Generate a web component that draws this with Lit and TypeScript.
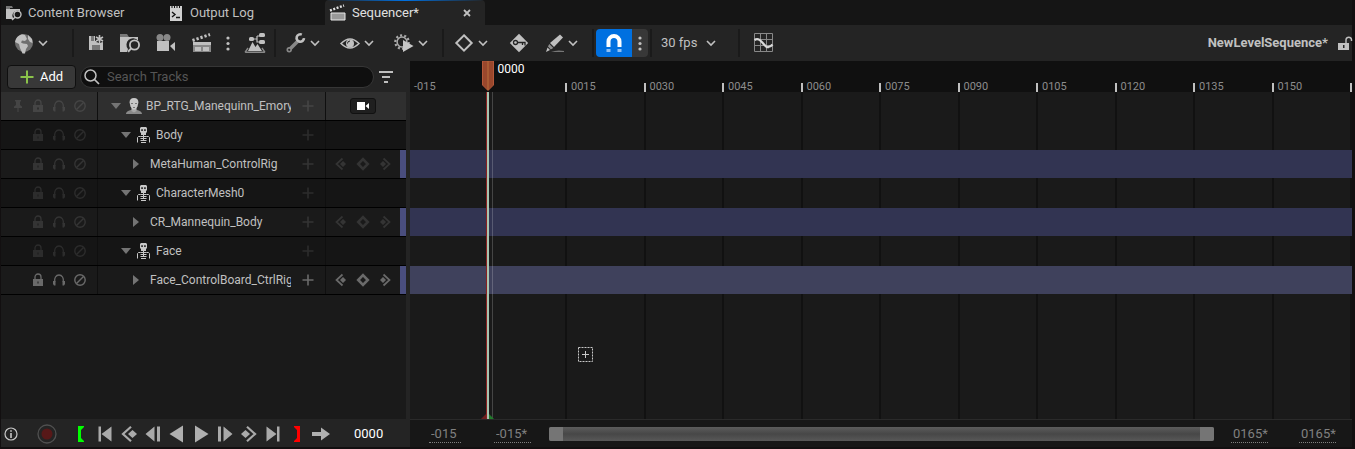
import { LitElement, html, svg, css, nothing, TemplateResult, SVGTemplateResult } from "lit";
import { customElement, property } from "lit/decorators.js";
import { classMap } from "lit/directives/class-map.js";
import { styleMap } from "lit/directives/style-map.js";

type Glyph = { w: number; h: number; body: SVGTemplateResult };

const skeleton = svg`
  <path fill="currentColor" fill-rule="evenodd" d="M4 0h5l1 1v4l-1 1v2h-5v-2l-1-1v-4zM4.300 2.200v1.800h1.500v-1.800zM7.200 2.200v1.800h1.500v-1.800z"/>
  <path stroke="currentColor" fill="none" d="M.5 15.500v-5l1-1h2M12.500 15.500v-5l-1-1h-2M3.500 9.500h6M3.500 11.500h6M3.500 13.500h6M6.500 8v6M4 15.500h5"/>`;

const GLYPHS: Record<string, Glyph> = {
  chevron: { w: 10, h: 6, body: svg`<path d="M1 1l4 4 4-4" fill="none" stroke="#c0c0c0" stroke-width="1.600"/>` },
  browserTab: { w: 16, h: 16, body: svg`
    <path d="M0 4V1h6l1 2H4v1z" fill="#777"/>
    <path d="M0 4h14v2.200a5 5 0 0 0-6.500 7.300L7 14H0z" fill="#c0c0c0"/>
    <circle cx="11.500" cy="9.500" r="3.500" fill="#151515" stroke="#c0c0c0" stroke-width="1.400"/>
    <path d="M9 12.200L6 15" stroke="#c0c0c0" stroke-width="1.500"/>` },
  logTab: { w: 16, h: 16, body: svg`
    <path d="M2 1h1.500v2h1V1H6v2h1V1h1.500v2h1V1H11v2h1V1h2v15H2z" fill="#d0d0d0"/>
    <path d="M4 7l3 2.500L4 12M8 12.500h4" fill="none" stroke="#151515" stroke-width="1.400"/>` },
  clapperTab: { w: 16, h: 16, body: svg`
    <path d="M0 5.500L14 .5" stroke="#e0e0e0" stroke-width="2.400" stroke-dasharray="2 1.500"/>
    <path d="M1 8h14v7H1z" fill="#999" stroke="#e8e8e8"/>` },
  close: { w: 8, h: 8, body: svg`<path d="M1 1l6 6M7 1L1 7" stroke="#c0c0c0" stroke-width="1.800"/>` },
  globe: { w: 20, h: 20, body: svg`
    <circle cx="10" cy="10" r="9" fill="#6f6f6f"/>
    <path d="M2 6a9 9 0 0 1 6-4.700L11 2l2 4-2 2-3-.5-1 2 2 1 4 .5 1 2-2 3-1 4.500H8.500L6 15l-1-4-4-2z" fill="#c0c0c0"/>
    <path d="M14 2l4 4 .5 4-2.500-1-2-3z" fill="#c0c0c0"/>` },
  save: { w: 20, h: 20, body: svg`
    <path d="M5 3h6v5h8v9H5z" fill="#c0c0c0"/>
    <path d="M7 3h3v5H7zM8 12h8v5H8z" fill="#777"/>
    <path d="M15.500 2v8M12 4l7 4M12 8l7-4" stroke="#242424" stroke-width="3.500"/>
    <path d="M15.500 2v8M12 4l7 4M12 8l7-4" stroke="#c0c0c0" stroke-width="1.600"/>` },
  browse: { w: 20, h: 20, body: svg`
    <path d="M0 4V1h7l2 3z" fill="#777"/>
    <path d="M0 4h18v3.500A6.500 6.500 0 0 0 8 16l-1 3H0z" fill="#c0c0c0"/>
    <circle cx="14.500" cy="12" r="4.600" fill="#242424" stroke="#c0c0c0" stroke-width="1.800"/>
    <path d="M11.200 15.400L8 18.700" stroke="#c0c0c0" stroke-width="2"/>` },
  camera: { w: 20, h: 20, body: svg`
    <circle cx="4" cy="4.500" r="3.500" fill="#888"/><circle cx="11" cy="4.500" r="3.500" fill="#888"/>
    <path d="M1 8h12v10H1zM14 13l5-4v9z" fill="#c0c0c0"/>` },
  clapper: { w: 20, h: 20, body: svg`
    <path d="M.5 7.500L18 1.500" stroke="#c0c0c0" stroke-width="3" stroke-dasharray="2.300 1.900"/>
    <path d="M1 9h18v10H1z" fill="#888"/><path d="M1 9h18v3H1z" fill="#c0c0c0"/>
    <path d="M3 14h6v4H3zM11 14h6v4h-6z" fill="#c0c0c0"/>` },
  dots: { w: 4, h: 16, body: svg`<circle cx="2" cy="3" r="1.600" fill="#c0c0c0"/><circle cx="2" cy="8.500" r="1.600" fill="#c0c0c0"/><circle cx="2" cy="14" r="1.600" fill="#c0c0c0"/>` },
  hierarchy: { w: 22, h: 20, body: svg`
    <path d="M8 6h5M13 3v6h3M13 3h3" stroke="#c0c0c0" fill="none" stroke-width="1.200"/>
    <rect x="5" y="4" width="5" height="4" rx="1.500" fill="#c0c0c0"/><rect x="15" y="0" width="6" height="4" rx="1.500" fill="#c0c0c0"/><rect x="15" y="7" width="6" height="4" rx="1.500" fill="#c0c0c0"/>
    <path d="M4 18L8.500 9l3 5 2-3 4.500 7z" fill="#c0c0c0"/><path d="M1 19.300L4 15M21 19.300L18 15M1 19.300h20" stroke="#888" stroke-width="1.400"/>` },
  wrench: { w: 20, h: 20, body: svg`
    <path d="M3 17L12 8" stroke="#888" stroke-width="3.600"/><circle cx="3.200" cy="16.800" r="2.700" fill="#888"/><circle cx="3.200" cy="16.800" r="1.100" fill="#242424"/>
    <path d="M15.800 1.600A3.700 3.700 0 1 0 18 5.200" fill="none" stroke="#c0c0c0" stroke-width="2.600"/>` },
  eye: { w: 20, h: 20, body: svg`
    <path d="M1 10.500Q10 1.500 19 10.500Q10 19.500 1 10.500z" fill="none" stroke="#c0c0c0" stroke-width="1.500"/>
    <circle cx="10" cy="10.500" r="4" fill="#c0c0c0"/><path d="M7.500 10.500a2.500 2.500 0 0 1 2.500-2.500" stroke="#242424" fill="none"/>` },
  gearPlay: { w: 20, h: 20, body: svg`
    <circle cx="8" cy="9" r="6.700" fill="none" stroke="#aaa" stroke-width="2.200" stroke-dasharray="2.100 2.100"/>
    <circle cx="8" cy="9" r="4.900" fill="none" stroke="#aaa" stroke-width="1.500"/>
    <path d="M9 7l10.500 6L9 19z" fill="#c8c8c8"/>` },
  diamond: { w: 20, h: 20, body: svg`<path d="M10 2.300L17.700 10 10 17.700 2.300 10z" fill="none" stroke="#c0c0c0" stroke-width="2"/>` },
  key: { w: 20, h: 20, body: svg`
    <path d="M11 .8L20.200 10 11 19.200 1.800 10z" fill="#c0c0c0"/>
    <circle cx="7.500" cy="9.500" r="2" fill="none" stroke="#242424" stroke-width="1.300"/><path d="M9.500 9.500H17v3M14.500 9.500V12" fill="none" stroke="#242424" stroke-width="1.300"/>` },
  pencil: { w: 20, h: 20, body: svg`
    <path d="M16 1.500l3 3L10 14l-4-4z" fill="#c0c0c0"/><path d="M5.300 11l4 4-2.500 1.500L4 13.500z" fill="#909090"/><path d="M3.500 14.500l2.500 2.500-4 2z" fill="#c0c0c0"/>
    <path d="M7 19Q13 16.500 20 18v1z" fill="#777"/>` },
  magnet: { w: 18, h: 20, body: svg`
    <path d="M3.500 14V8.500a5.500 5.500 0 0 1 11 0V14" fill="none" stroke="#fff" stroke-width="4"/>
    <path d="M1.500 16h4v3h-4zM12.500 16h4v3h-4z" fill="#8fc0f4"/>` },
  curve: { w: 20, h: 20, body: svg`
    <path d="M.5.5h18v18H.5zM6.500.5v18M12.500.5v18M.5 6.500h18M.5 12.500h18" stroke="#888" fill="none"/>
    <path d="M.5 7C7 2.500 11 16.500 14.500 14Q16.500 14 18.500 11.500" stroke="#d8d8d8" stroke-width="2.200" fill="none"/>` },
  unlock: { w: 14, h: 16, body: svg`
    <path d="M0 8h11v7H0z" fill="#c0c0c0"/><path d="M5 10h1.500v3H5z" fill="#242424"/>
    <path d="M8 8V4.500a2.800 2.800 0 0 1 5.500 0V6" fill="none" stroke="#c0c0c0" stroke-width="1.400"/>` },
  plusGreen: { w: 14, h: 14, body: svg`<path d="M7 .5v13M.5 7h13" stroke="#8bc34a" stroke-width="2"/>` },
  search: { w: 16, h: 16, body: svg`<circle cx="6.500" cy="6.500" r="5.500" fill="none" stroke="#c0c0c0" stroke-width="1.500"/><path d="M10.500 10.500l4.500 4.500" stroke="#c0c0c0" stroke-width="1.700"/>` },
  filter: { w: 16, h: 14, body: svg`<path d="M1 2h14M4 7h8M6 12h4" stroke="#c0c0c0" stroke-width="2"/>` },
  pin: { w: 12, h: 14, body: svg`<path d="M3 1h6v1.500H8V6l2 1.500V9H2V7.500L4 6V2.500H3zM5.400 9h1.200v4H5.400z" fill="currentColor"/>` },
  lock: { w: 12, h: 14, body: svg`<path d="M1 6h10v7H1z" fill="currentColor"/><path d="M3 6V4a3 3 0 0 1 6 0v2" fill="none" stroke="currentColor" stroke-width="1.300"/><path d="M5.500 8.500h1v2h-1z" fill="#1a1a1a"/>` },
  phones: { w: 12, h: 14, body: svg`<path d="M1.700 9C1 5 3 2 6 2s5 3 4.300 7" fill="none" stroke="currentColor" stroke-width="1.300"/><path d="M0 8h2.500v4.500H1L0 11zM12 8H9.500v4.500H11l1-1.500z" fill="currentColor"/>` },
  ban: { w: 12, h: 14, body: svg`<circle cx="6" cy="7" r="5.200" fill="none" stroke="currentColor" stroke-width="1.400"/><path d="M2.500 10.500l7-7" stroke="currentColor" stroke-width="1.400"/>` },
  open: { w: 12, h: 8, body: svg`<path d="M1 1h10L6 7z" fill="#747474"/>` },
  closed: { w: 12, h: 12, body: svg`<path d="M3 1v10l6-5z" fill="#747474"/>` },
  person: { w: 16, h: 16, body: svg`
    <path d="M0 16c0-3 4-3.500 6-4.500h4c2 1 6 1.500 6 4.500z" fill="#8a8a8a"/><path d="M5.500 9h5v4L8 14.500 5.500 13z" fill="#a8a8a8"/>
    <path d="M8 0c3 0 4.600 1.800 4.400 4.500L11.500 8.500 9.500 11.500h-3L4.500 8.500 3.600 4.500C3.400 1.800 5 0 8 0z" fill="#c8c8c8"/>
    <path d="M5 5.500h2M9 5.500h2M7 9.500h2" stroke="#777"/>` },
  skeleton: { w: 14, h: 16, body: skeleton },
  plus: { w: 12, h: 12, body: svg`<path d="M6 .5v11M.5 6h11" stroke="currentColor" stroke-width="1.600"/>` },
  rowCamera: { w: 14, h: 10, body: svg`<path d="M1 1h8v8H1zM9.500 5L13 2v6z" fill="#fff"/>` },
  keyPrev: { w: 14, h: 12, body: svg`<path d="M8.500.5L2.500 6l6 5.500" fill="none" stroke="currentColor" stroke-width="1.700"/><path d="M6 6l3-3 3 3-3 3z" fill="currentColor"/>` },
  keyAdd: { w: 14, h: 12, body: svg`<path d="M7 1.200L11.800 6 7 10.800 2.200 6z" fill="none" stroke="currentColor" stroke-width="2.600"/>` },
  keyNext: { w: 14, h: 12, body: svg`<path d="M5.500.5l6 5.500-6 5.500" fill="none" stroke="currentColor" stroke-width="1.700"/><path d="M8 6L5 3 2 6l3 3z" fill="currentColor"/>` },
  info: { w: 14, h: 14, body: svg`<circle cx="7" cy="7" r="6" fill="none" stroke="#c8c8c8" stroke-width="1.200"/><path d="M7 3.200v1.600M7 6v5" stroke="#c8c8c8" stroke-width="1.600"/>` },
  record: { w: 20, h: 20, body: svg`<circle cx="10" cy="10" r="9" fill="none" stroke="#505050" stroke-width="1.300"/><circle cx="10" cy="10" r="5.500" fill="#571818"/>` },
  inMark: { w: 6, h: 16, body: svg`<path d="M0 0h6v1L3 4v8l3 3v1H0z" fill="#0f0"/>` },
  outMark: { w: 6, h: 16, body: svg`<path d="M6 0H0v1l3 3v8l-3 3v1h6z" fill="#f00"/>` },
  toStart: { w: 16, h: 16, body: svg`<path d="M1.500.5h2.500v15H1.500zM14.500.5v15L4.500 8z" fill="#aaa"/>` },
  toEnd: { w: 16, h: 16, body: svg`<path d="M14.500.5H12v15h2.500zM1.500.5v15L11.500 8z" fill="#aaa"/>` },
  prevKey: { w: 16, h: 16, body: svg`<path d="M10 .8L2 8l8 7.200" fill="none" stroke="#aaa" stroke-width="2.200"/><path d="M7 8l4.500-4L16 8l-4.500 4z" fill="#aaa"/>` },
  nextKey: { w: 16, h: 16, body: svg`<path d="M6 .8L14 8l-8 7.200" fill="none" stroke="#aaa" stroke-width="2.200"/><path d="M9 8L4.500 4 0 8l4.500 4z" fill="#aaa"/>` },
  stepBack: { w: 16, h: 16, body: svg`<path d="M.5 8L9.500.5v15zM12 .5h3v15h-3z" fill="#aaa"/>` },
  stepNext: { w: 16, h: 16, body: svg`<path d="M15.500 8L6.500.5v15zM1 .5h3v15H1z" fill="#aaa"/>` },
  playBack: { w: 16, h: 18, body: svg`<path d="M.5 9L14 .5v17z" fill="#b0b0b0"/>` },
  play: { w: 16, h: 18, body: svg`<path d="M15.500 9L2 .5v17z" fill="#b0b0b0"/>` },
  loop: { w: 18, h: 16, body: svg`<path d="M0 6h9V1.500L18 8l-9 6.500V10H0z" fill="#b0b0b0"/>` },
  addMarker: { w: 15, h: 15, body: svg`<path d="M.5.5h14v14H.5z" fill="none" stroke="#c8c8c8" stroke-dasharray="2 1"/><path d="M7.500 4v7M4 7.500h7" stroke="#c8c8c8"/>` },
  head: { w: 12, h: 30, body: svg`<path d="M.5 0h11v24L6 29.500.5 24z" fill="#99472c" stroke="#b5583a"/><path d="M6 0v29" stroke="#b8703c"/>` },
};

function icon(name: string): TemplateResult {
  const g = GLYPHS[name];
  return html`<svg width=${g.w} height=${g.h} viewBox="0 0 ${g.w} ${g.h}" aria-hidden="true">${g.body}</svg>`;
}

const base = css`
  * { box-sizing: border-box; }
  svg { display: block; flex: none; overflow: visible; }
  button, input, select {
    margin: 0; padding: 0; border: 0; background: none; color: inherit; font: inherit; outline: none; appearance: none; min-width: 0;
  }
  button { display: flex; align-items: center; justify-content: center; cursor: pointer; }
`;

interface Track { name: string; depth: number; glyph?: string; expanded: boolean; kind: "object" | "component" | "rig"; hot?: boolean }

const TRACKS: Track[] = [
  { name: "BP_RTG_Manequinn_Emory", depth: 0, glyph: "person", expanded: true, kind: "object" },
  { name: "Body", depth: 1, glyph: "skeleton", expanded: true, kind: "component" },
  { name: "MetaHuman_ControlRig", depth: 2, expanded: false, kind: "rig" },
  { name: "CharacterMesh0", depth: 1, glyph: "skeleton", expanded: true, kind: "component" },
  { name: "CR_Mannequin_Body", depth: 2, expanded: false, kind: "rig" },
  { name: "Face", depth: 1, glyph: "skeleton", expanded: true, kind: "component" },
  { name: "Face_ControlBoard_CtrlRig", depth: 2, expanded: false, kind: "rig", hot: true },
];

@customElement("seq-tabs")
export class SeqTabs extends LitElement {
  static styles = [base, css`
    :host { display: block; background: #151515; }
    .tabs { display: flex; gap: 2px; height: 25px; }
    .tab { display: flex; align-items: center; width: 160px; padding: 0 14px 0 5px; color: #c0c0c0; border-radius: 4px 4px 0 0; }
    .name { gap: 6px; flex: 1; justify-content: flex-start; }
    .active { color: #e0e0e0; background: linear-gradient(90deg, transparent, #0070e0 50%, transparent) top / 100% 1px no-repeat, #242424; }
  `];
  render() {
    return html`<nav class="tabs">
      <div class="tab"><button class="name">${icon("browserTab")}Content Browser</button></div>
      <div class="tab"><button class="name">${icon("logTab")}Output Log</button></div>
      <div class="tab active"><button class="name">${icon("clapperTab")}Sequencer*</button><button aria-label="Close tab">${icon("close")}</button></div>
    </nav>`;
  }
}

@customElement("seq-toolbar")
export class SeqToolbar extends LitElement {
  static styles = [base, css`
    :host { display: block; background: #242424; }
    .bar { display: flex; height: 36px; padding: 4px 0 4px 3px; color: #c0c0c0; }
    .group { display: flex; padding: 0 2px; border-right: 2px solid #1a1a1a; }
    .first { padding-right: 12px; }
    .last { padding-left: 6px; border: 0; }
    .tool { padding: 0 8px; }
    .combo { padding: 0 12px 0 8px; gap: 4px; }
    .slot { display: flex; width: 20px; }
    .more { width: 16px; }
    .snap { width: 36px; background: #0070e0; border-radius: 4px 0 0 4px; }
    .snapmore { width: 16px; background: #383838; border-radius: 0 4px 4px 0; }
    .rate { display: grid; align-items: center; padding: 0 20px 0 7px; width: 82px; }
    .rate > * { grid-area: 1 / 1; }
    .rate svg { justify-self: end; pointer-events: none; }
    .title { display: flex; align-items: center; gap: 10px; margin-left: auto; font-weight: 700; }
  `];
  private tool(g: string, label: string) { return html`<button class="tool" aria-label=${label}><span class="slot">${icon(g)}</span></button>`; }
  private combo(g: string, label: string) { return html`<button class="combo" aria-label=${label}><span class="slot">${icon(g)}</span>${icon("chevron")}</button>`; }
  render() {
    return html`<div class="bar">
      <div class="group first">${this.combo("globe", "World")}</div>
      <div class="group">
        ${this.tool("save", "Save")}${this.tool("browse", "Find in content browser")}${this.tool("camera", "Create camera")}${this.tool("clapper", "Render movie")}
        <button class="more" aria-label="Render options">${icon("dots")}</button>${this.tool("hierarchy", "Director")}
      </div>
      <div class="group">${this.combo("wrench", "Actions")}${this.combo("eye", "View options")}${this.combo("gearPlay", "Playback options")}</div>
      <div class="group">${this.combo("diamond", "Key options")}${this.tool("key", "Auto key")}${this.combo("pencil", "Edit options")}</div>
      <div class="group"><button class="snap" aria-label="Snapping">${icon("magnet")}</button><button class="snapmore" aria-label="Snapping options">${icon("dots")}</button></div>
      <div class="group"><div class="rate"><select aria-label="Frame rate"><option>30 fps</option></select>${icon("chevron")}</div></div>
      <div class="group last">${this.tool("curve", "Curve editor")}</div>
      <div class="title"><span>NewLevelSequence*</span><button aria-label="Lock sequence">${icon("unlock")}</button></div>
    </div>`;
  }
}

@customElement("seq-outliner")
export class SeqOutliner extends LitElement {
  @property({ attribute: false }) tracks: Track[] = [];
  static styles = [base, css`
    :host { display: block; background: #1a1a1a; }
    .head { display: flex; align-items: center; gap: 4px; height: 31px; padding: 0 12px 0 6px; background: #242424; }
    .add { gap: 6px; width: 69px; height: 24px; color: #fff; background: #383838; border: 1px solid #0f0f0f; border-radius: 4px; }
    .search { display: flex; flex: 1; align-items: center; gap: 7px; height: 22px; padding: 0 3px; background: #0f0f0f; border: 1px solid #363636; border-radius: 11px; }
    .search input { flex: 1; }
    .search input::placeholder { color: #555; opacity: 1; }
    .row { display: grid; grid-template-columns: 97px 1fr 74px 6px; height: 29px; border-bottom: 1px solid #000; background: #151515; color: #2c2c2c; }
    .rig { background: #1a1a1a; color: #343434; }
    .object { background: #2f2f2f; color: #454545; }
    .hot { color: #6a6a6a; }
    .flags { display: grid; grid-template-columns: 20px 20px 22px 20px; padding-left: 7px; border-right: 1px solid #0f0f0f; }
    .label { display: flex; align-items: center; gap: 4px; padding-right: 4px; border-right: 1px solid #0f0f0f; min-width: 0; }
    .d0 { padding-left: 12px; }
    .d1 { padding-left: 22px; }
    .d2 { padding-left: 32px; }
    .glyph { display: flex; justify-content: center; width: 16px; color: #c8c8c8; }
    .text { flex: 1; overflow: hidden; white-space: nowrap; color: #c0c0c0; font-size: 12px; line-height: 16px; }
    .d2 .text { padding-left: 4px; }
    .plus { width: 26px; height: 28px; }
    .keys { display: grid; grid-template-columns: repeat(3, 22px); justify-content: center; }
    .cam { align-self: center; justify-self: center; width: 26px; height: 16px; background: #1f1f1f; border: 1px solid #111; border-radius: 3px; }
    .chip { background: #4a4e7e; }
  `];
  private row(t: Track) {
    const rig = t.kind === "rig";
    const object = t.kind === "object";
    return html`<div class=${classMap({ row: true, rig, object, hot: !!t.hot })} role="treeitem">
      <div class="flags">
        ${object ? html`<button aria-label="Pin">${icon("pin")}</button>` : html`<span></span>`}
        <button aria-label="Lock">${icon("lock")}</button><button aria-label="Solo">${icon("phones")}</button><button aria-label="Mute">${icon("ban")}</button>
      </div>
      <div class="label d${t.depth}">
        <button aria-label="Toggle">${icon(t.expanded ? "open" : "closed")}</button>
        ${t.glyph ? html`<span class="glyph">${icon(t.glyph)}</span>` : nothing}
        <span class="text">${t.name}</span>
        <button class="plus" aria-label="Add track">${icon("plus")}</button>
      </div>
      ${rig ? html`<div class="keys">
        <button aria-label="Previous key">${icon("keyPrev")}</button><button aria-label="Add key">${icon("keyAdd")}</button><button aria-label="Next key">${icon("keyNext")}</button>
      </div><span class="chip"></span>` : object ? html`<button class="cam" aria-label="Camera lock">${icon("rowCamera")}</button>` : nothing}
    </div>`;
  }
  render() {
    return html`
      <div class="head">
        <button class="add">${icon("plusGreen")}Add</button>
        <label class="search">${icon("search")}<input type="text" placeholder="Search Tracks" aria-label="Search Tracks"></label>
        <button aria-label="Filter">${icon("filter")}</button>
      </div>
      <div role="tree">${this.tracks.map((t) => this.row(t))}</div>`;
  }
}

@customElement("seq-timeline")
export class SeqTimeline extends LitElement {
  @property({ attribute: false }) tracks: Track[] = [];
  private ticks = Array.from({ length: 12 }, (_, i) => (i - 1) * 15);
  static styles = [base, css`
    :host { display: grid; grid-template-rows: 31px 1fr; position: relative; background: #1a1a1a; overflow: hidden; }
    .ruler, .grid { display: grid; grid-template-columns: repeat(12, 1fr); }
    .ruler { background: #101010; color: #8c8c8c; font-size: 11px; line-height: 10px; align-items: end; }
    .tick { height: 9px; padding-left: 4px; border-right: 2px solid #c0c0c0; display: flex; align-items: flex-end; }
    .body { display: grid; }
    .body > * { grid-area: 1 / 1; }
    .line { border-right: 2px solid #111; }
    .zero { border-color: transparent; }
    .lane { height: 29px; border-bottom: 1px solid transparent; background-clip: padding-box; }
    .rig { background-color: #323452; }
    .hot { background-color: #3f415c; }
    .playhead { position: absolute; top: 0; bottom: 0; width: 12px; margin-left: -6px; display: grid; grid-template-rows: 31px 1fr; }
    .stem { position: relative; display: flex; width: 12px; }
    .stem i { width: 3px; margin-left: 4px; background: linear-gradient(90deg, #8a1f1f 1px, #a9c4b0 1px); }
    .stem b { width: 1px; margin-left: 3px; background: #ffffff30; }
    .ends { position: absolute; bottom: 0; }
    .now { position: absolute; top: 0; left: 15px; color: #fff; font-size: 12px; line-height: 16px; }
    .cursor { position: absolute; }
  `];
  private frame(f: number) { return `${((f + 15) / 180) * 100}%`; }
  render() {
    return html`
      <div class="ruler">${this.ticks.map((f) => html`<div class=${classMap({ tick: true, zero: f < 0 })}>${f === 0 ? nothing : f < 0 ? "-015" : String(f).padStart(4, "0")}</div>`)}</div>
      <div class="body">
        <div class="grid">${this.ticks.map((f) => html`<div class=${classMap({ line: true, zero: f < 0 })}></div>`)}</div>
        <div>${this.tracks.map((t) => html`<div class=${classMap({ lane: true, rig: t.kind === "rig", hot: !!t.hot })}></div>`)}</div>
      </div>
      <div class="playhead" style=${styleMap({ left: this.frame(0) })}>
        ${icon("head")}
        <div class="stem"><i></i><b></b>
          <svg class="ends" width="12" height="5" viewBox="0 0 12 5" aria-hidden="true"><path d="M-1 5l5-5v5z" fill="#6d2020"/><path d="M7 0l5 5H7z" fill="#207a2a"/></svg>
        </div>
        <span class="now">0000</span>
      </div>
      <div class="cursor" style=${styleMap({ left: this.frame(17.1), top: "286px" })}>${icon("addMarker")}</div>`;
  }
}

@customElement("seq-transport")
export class SeqTransport extends LitElement {
  static styles = [base, css`
    :host { display: flex; align-items: center; height: 28px; padding-top: 2px; box-sizing: border-box; background: #242424; }
    button { height: 26px; }
    .info { width: 20px; }
    .rec { width: 24px; margin: 0 10px 0 14px; }
    .step { width: 24px; }
    .frame { width: 36px; margin-left: 21px; color: #fff; }
  `];
  private steps: [string, string][] = [
    ["inMark", "Set start"], ["toStart", "To start"], ["prevKey", "Previous key"], ["stepBack", "Step back"], ["playBack", "Play reverse"], ["play", "Play"],
    ["stepNext", "Step forward"], ["nextKey", "Next key"], ["toEnd", "To end"], ["outMark", "Set end"], ["loop", "Loop mode"],
  ];
  render() {
    return html`<button class="info" aria-label="Status">${icon("info")}</button><button class="rec" aria-label="Record">${icon("record")}</button>
      ${this.steps.map(([g, l]) => html`<button class="step" aria-label=${l}>${icon(g)}</button>`)}
      <input class="frame" type="text" aria-label="Current frame" .value=${"0000"}>`;
  }
}

@customElement("seq-range")
export class SeqRange extends LitElement {
  static styles = [base, css`
    :host { display: flex; align-items: center; height: 28px; box-sizing: border-box; padding: 1px 16px 0 19px; background: #171717; border-top: 1px solid #2a2a2a; color: #808080; }
    .time { width: 37px; height: 17px; padding: 0 0 0 2px; border-bottom: 1px dotted #808080; line-height: 16px; }
    .short { width: 32px; margin-right: 33px; }
    .far { margin-left: 31px; }
    .bar { display: flex; justify-content: space-between; flex: 1; height: 14px; margin: 0 17px 0 18px; border-radius: 2px; overflow: hidden; background: linear-gradient(#5c5c5c, #474747 50%, #585858); }
    .grip { width: 14px; background: #757575; }
  `];
  render() {
    return html`<input class="time short" aria-label="Working start" .value=${"-015"}><input class="time" aria-label="View start" .value=${"-015*"}>
      <div class="bar"><button class="grip" aria-label="Range start"></button><button class="grip" aria-label="Range end"></button></div>
      <input class="time" aria-label="View end" .value=${"0165*"}><input class="time far" aria-label="Working end" .value=${"0165*"}>`;
  }
}

@customElement("app-root")
export class AppRoot extends LitElement {
  static styles = [base, css`
    :host {
      display: grid; grid-template-rows: auto auto 1fr auto; grid-template-columns: 405px 4px minmax(0, 1fr);
      min-height: 100vh; box-sizing: border-box; padding: 0 3px 2px 1px; background: #120f10;
      font-family: Roboto, "Liberation Sans", sans-serif; font-size: 13px; line-height: 16px; color: #c0c0c0;
    }
    .wide { grid-column: 1 / -1; }
    .split { grid-column: 2; grid-row: 3 / 5; background: #242424; }
  `];
  render() {
    return html`<seq-tabs class="wide"></seq-tabs><seq-toolbar class="wide"></seq-toolbar>
      <seq-outliner .tracks=${TRACKS}></seq-outliner><div class="split"></div><seq-timeline .tracks=${TRACKS}></seq-timeline>
      <seq-transport></seq-transport><seq-range></seq-range>`;
  }
}
